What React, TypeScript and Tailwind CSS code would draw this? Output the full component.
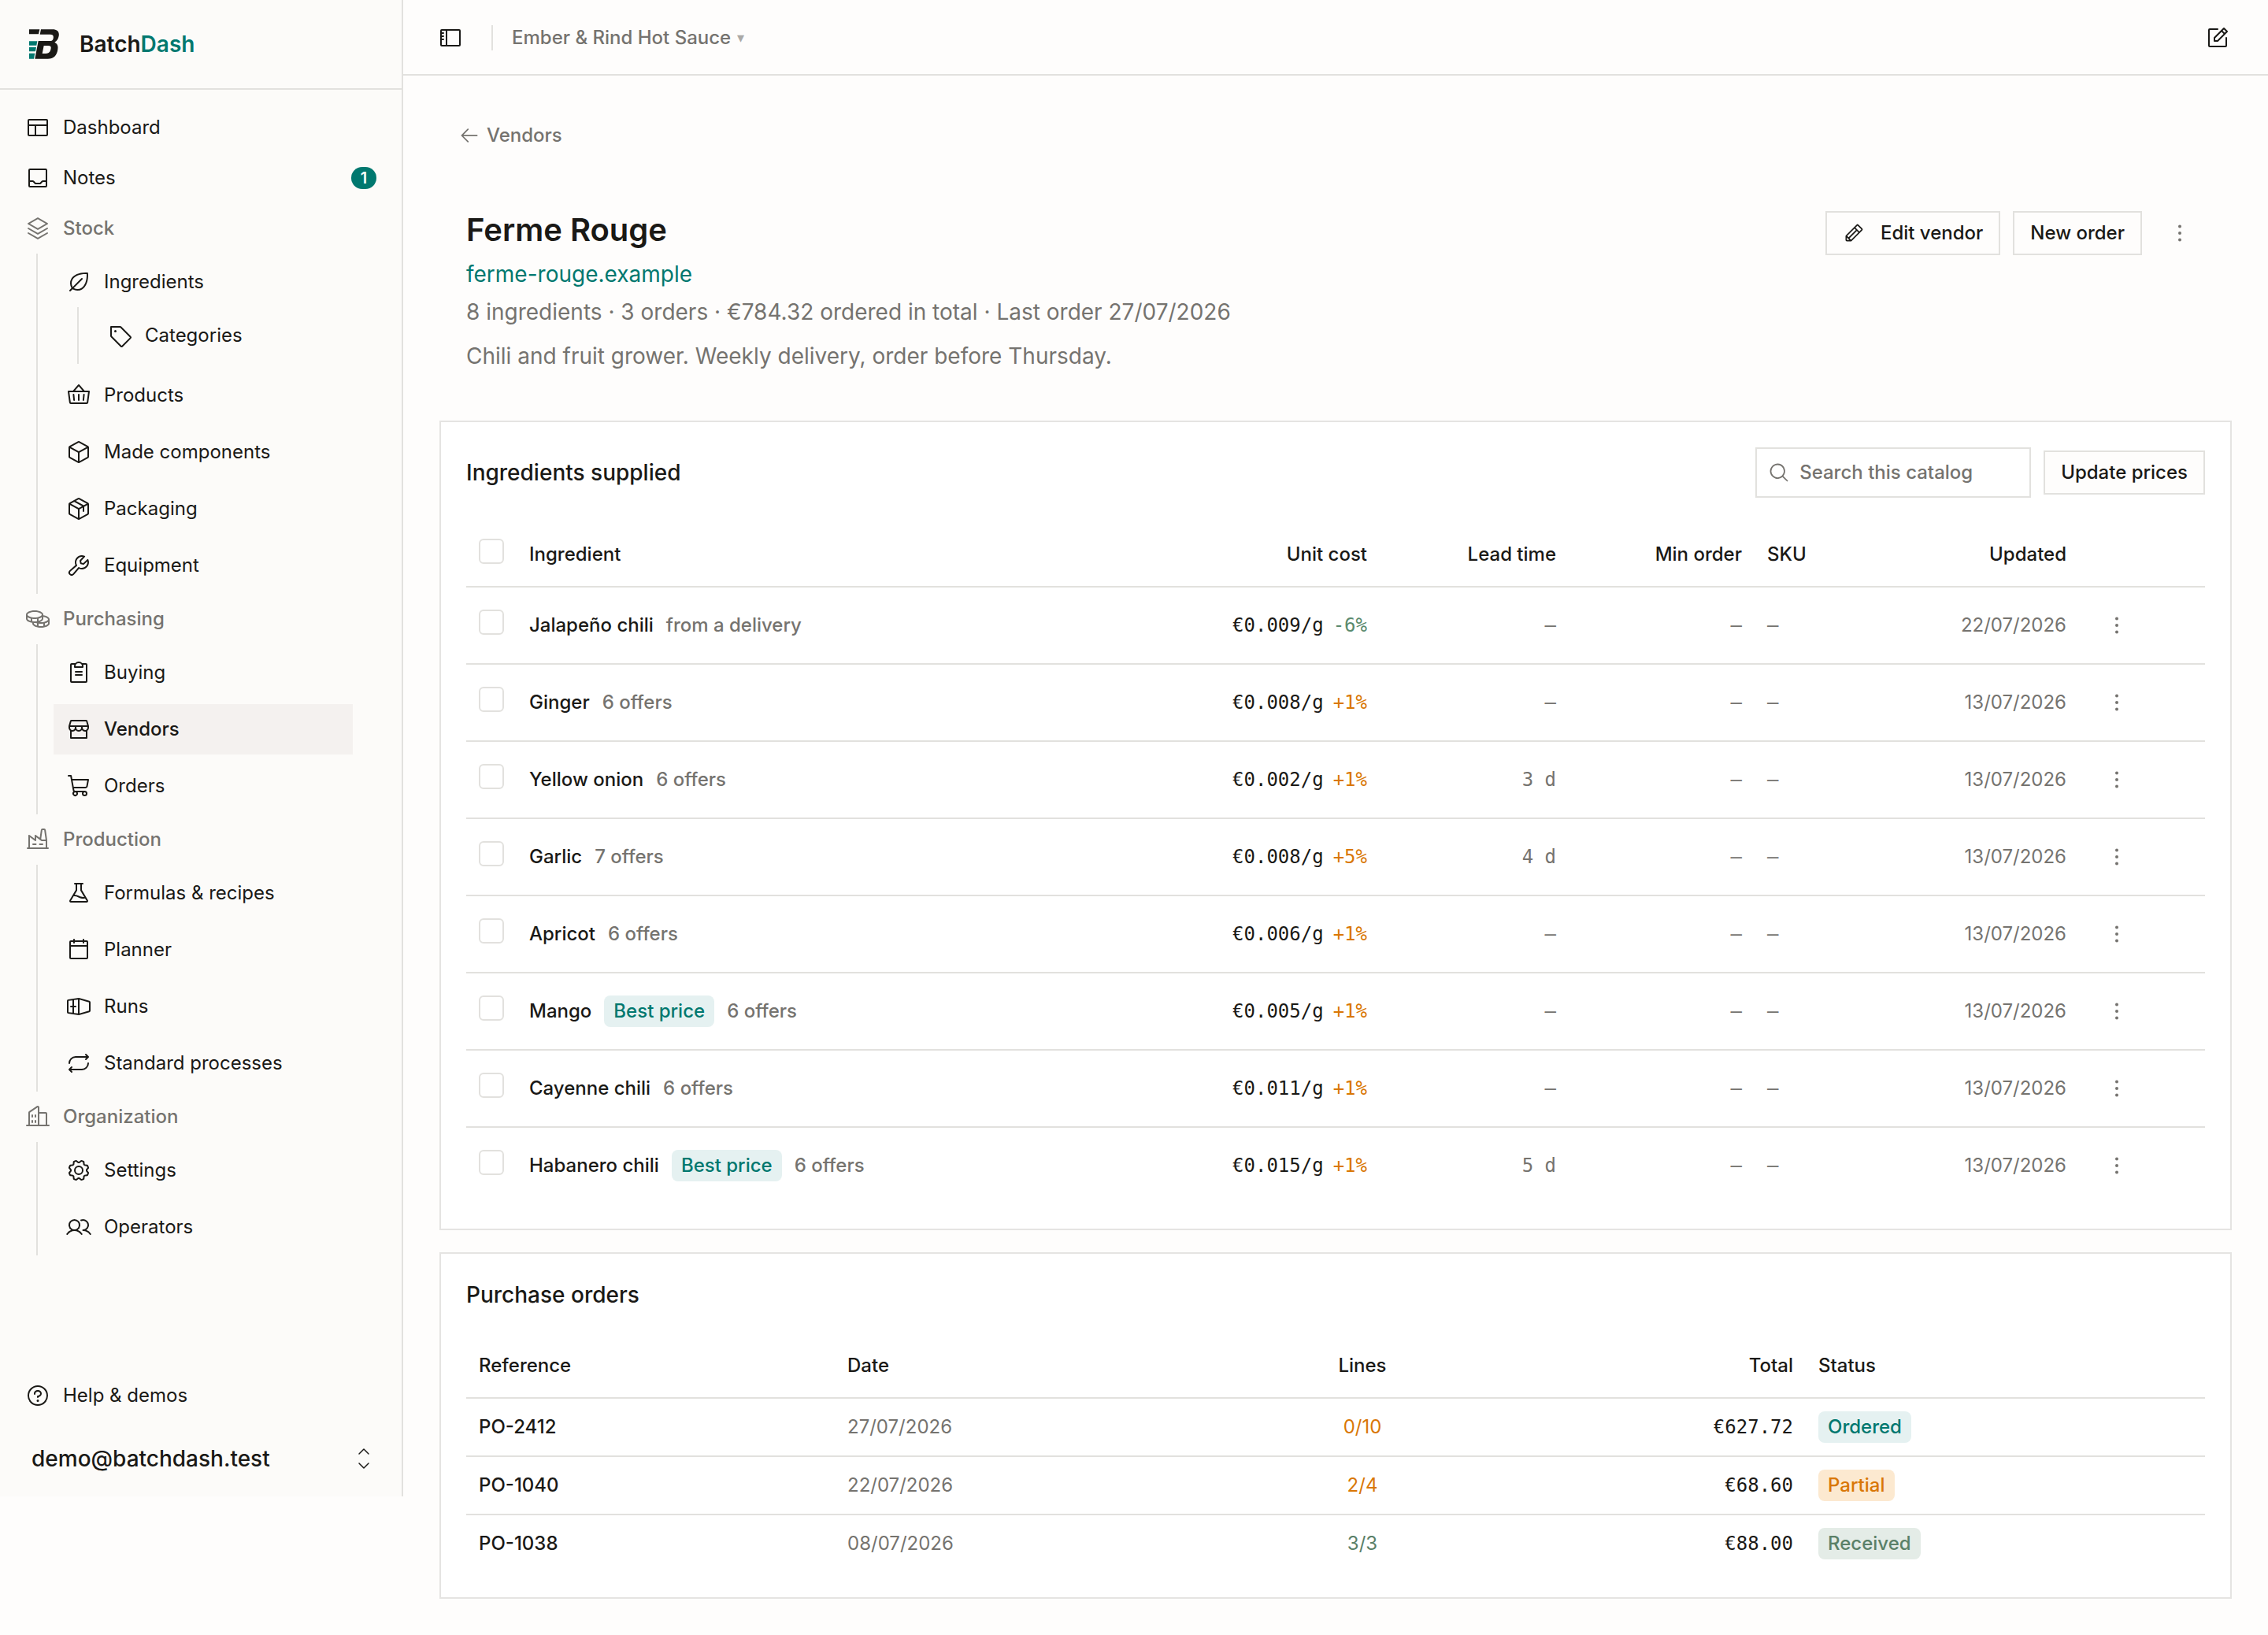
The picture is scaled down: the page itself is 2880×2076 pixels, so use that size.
import type { ReactNode } from 'react'
import type { IconType } from 'react-icons'
import {
    PiArrowLeft,
    PiBasket,
    PiBuildings,
    PiCalendarBlank,
    PiCaretUpDownLight,
    PiClipboardText,
    PiCoins,
    PiCube,
    PiDotsThreeVerticalBold,
    PiFactory,
    PiFlask,
    PiGear,
    PiLayout,
    PiLeaf,
    PiMagnifyingGlass,
    PiNotePencil,
    PiPackage,
    PiPencil,
    PiQuestion,
    PiRepeat,
    PiShippingContainer,
    PiShoppingCart,
    PiSidebar,
    PiStack,
    PiStorefront,
    PiTag,
    PiTray,
    PiUsers,
    PiWrench,
} from 'react-icons/pi'

interface NavItem {
    label: string
    icon: IconType
    active?: boolean
    children?: NavItem[]
}

const groups: NavItem[] = [
    {
        label: 'Stock',
        icon: PiStack,
        children: [
            { label: 'Ingredients', icon: PiLeaf, children: [{ label: 'Categories', icon: PiTag }] },
            { label: 'Products', icon: PiBasket },
            { label: 'Made components', icon: PiCube },
            { label: 'Packaging', icon: PiPackage },
            { label: 'Equipment', icon: PiWrench },
        ],
    },
    {
        label: 'Purchasing',
        icon: PiCoins,
        children: [
            { label: 'Buying', icon: PiClipboardText },
            { label: 'Vendors', icon: PiStorefront, active: true },
            { label: 'Orders', icon: PiShoppingCart },
        ],
    },
    {
        label: 'Production',
        icon: PiFactory,
        children: [
            { label: 'Formulas & recipes', icon: PiFlask },
            { label: 'Planner', icon: PiCalendarBlank },
            { label: 'Runs', icon: PiShippingContainer },
            { label: 'Standard processes', icon: PiRepeat },
        ],
    },
    {
        label: 'Organization',
        icon: PiBuildings,
        children: [
            { label: 'Settings', icon: PiGear },
            { label: 'Operators', icon: PiUsers },
        ],
    },
]

const ingredients = [
    { name: 'Jalapeño chili', note: 'from a delivery', cost: '€0.009/g', change: '-6%', lead: '–', updated: '22/07/2026' },
    { name: 'Ginger', note: '6 offers', cost: '€0.008/g', change: '+1%', lead: '–', updated: '13/07/2026' },
    { name: 'Yellow onion', note: '6 offers', cost: '€0.002/g', change: '+1%', lead: '3 d', updated: '13/07/2026' },
    { name: 'Garlic', note: '7 offers', cost: '€0.008/g', change: '+5%', lead: '4 d', updated: '13/07/2026' },
    { name: 'Apricot', note: '6 offers', cost: '€0.006/g', change: '+1%', lead: '–', updated: '13/07/2026' },
    { name: 'Mango', note: '6 offers', best: true, cost: '€0.005/g', change: '+1%', lead: '–', updated: '13/07/2026' },
    { name: 'Cayenne chili', note: '6 offers', cost: '€0.011/g', change: '+1%', lead: '–', updated: '13/07/2026' },
    { name: 'Habanero chili', note: '6 offers', best: true, cost: '€0.015/g', change: '+1%', lead: '5 d', updated: '13/07/2026' },
]

const orders = [
    { ref: 'PO-2412', date: '27/07/2026', lines: '0/10', total: '€627.72', status: 'Ordered' },
    { ref: 'PO-1040', date: '22/07/2026', lines: '2/4', total: '€68.60', status: 'Partial' },
    { ref: 'PO-1038', date: '08/07/2026', lines: '3/3', total: '€88.00', status: 'Received' },
]

const badgeStyles: Record<string, string> = {
    Ordered: 'bg-[#e5f1f1] text-[#00786f]',
    Partial: 'bg-[#fce9d0] text-[#d97706]',
    Received: 'bg-[#e4ece7] text-[#5a8068]',
}

function Logo() {
    return (
        <svg className="size-[38px]" viewBox="0 0 114 114" aria-hidden="true">
            <path fill="#1a1916" d="M0 1h40l-4 18H0z" />
            <path
                fill="#1a1916"
                fillRule="evenodd"
                d="M45 1h44c18 0 27 9 24 25-2 11-7 19-16 24 11 5 14 14 12 27-3 23-16 36-38 36H22l13-68h44c8 0 12-3 13-10 2-11-2-15-12-15H41zM56 63h17c8 0 11 3 10 10-2 14-8 20-19 20H50z"
            />
            <path fill="#00786f" d="M0 46h31l-3 16H0zM0 69h27l-3 16H0zM0 92h22l-4 21H0z" />
        </svg>
    )
}

function NavLink({ item }: { item: NavItem }) {
    const Icon = item.icon
    return (
        <li>
            <a
                href="#"
                className={`flex h-16 items-center gap-4 px-4 ${item.active ? 'bg-[#f4f1ef] font-medium' : ''}`}
            >
                <Icon className="size-8" />
                {item.label}
            </a>
            {item.children && (
                <ul className="ml-[30px] border-l-2 border-[#e2e1de] py-1 pl-5">
                    {item.children.map((child) => (
                        <NavLink key={child.label} item={child} />
                    ))}
                </ul>
            )}
        </li>
    )
}

function Sidebar() {
    return (
        <aside className="w-[512px] shrink-0 self-start border-r-2 border-[#e2e1de] bg-[#fcfbf9]">
            <div className="flex h-[114px] items-center gap-[26px] border-b-2 border-[#e2e1de] px-[37px]">
                <Logo />
                <span className="text-[28px] font-semibold">
                    Batch<span className="text-[#00786f]">Dash</span>
                </span>
            </div>
            <nav className="pt-4 pb-[146px]">
                <a href="#" className="flex h-16 items-center gap-4 px-8">
                    <PiLayout className="size-8" />
                    Dashboard
                </a>
                <a href="#" className="flex h-16 items-center gap-4 px-8">
                    <PiTray className="size-8" />
                    Notes
                    <span className="ml-auto flex h-7 w-8 items-center justify-center rounded-full bg-[#00786f] text-[20px] font-semibold text-white">
                        1
                    </span>
                </a>
                {groups.map((group) => (
                    <div key={group.label}>
                        <div className="flex h-16 items-center gap-4 px-8 font-medium text-[#75736f]">
                            <group.icon className="size-8" />
                            {group.label}
                        </div>
                        <ul className="mr-[62px] ml-[46px] flex flex-col gap-2 border-l-2 border-[#e2e1de] py-1 pl-5">
                            {group.children?.map((item) => (
                                <NavLink key={item.label} item={item} />
                            ))}
                        </ul>
                    </div>
                ))}
            </nav>
            <a href="#" className="flex h-16 items-center gap-4 px-8">
                <PiQuestion className="size-8" />
                Help &amp; demos
            </a>
            <button type="button" className="flex h-24 w-full items-center justify-between pr-8 pl-10 text-[28px] font-medium">
                demo@batchdash.test
                <PiCaretUpDownLight className="size-8" />
            </button>
        </aside>
    )
}

function TopBar() {
    return (
        <header className="flex h-24 items-center border-b-2 border-[#e2e1de] pt-[2px] pr-12 pl-11">
            <button type="button" aria-label="Toggle sidebar">
                <PiSidebar className="size-8" />
            </button>
            <span className="mr-6 ml-9 h-8 w-[2px] bg-[#e2e1de]" />
            <button type="button" className="flex items-center gap-2 font-medium text-[#75736f]">
                Ember &amp; Rind Hot Sauce
                <span className="text-[18px] text-[#aaa9a6]">▾</span>
            </button>
            <button type="button" aria-label="New note" className="ml-auto">
                <PiNotePencil className="size-8" />
            </button>
        </header>
    )
}

function OutlineButton({ children }: { children: ReactNode }) {
    return (
        <button
            type="button"
            className="flex h-14 items-center gap-5 border-2 border-[#e2e1de] bg-[#fefdfc] px-5 font-medium whitespace-nowrap"
        >
            {children}
        </button>
    )
}

function MoreButton({ label }: { label: string }) {
    return (
        <button type="button" aria-label={label} className="flex h-14 w-16 items-center justify-center text-[#75736f]">
            <PiDotsThreeVerticalBold className="size-8" />
        </button>
    )
}

function Checkbox({ label }: { label: string }) {
    return (
        <input
            type="checkbox"
            aria-label={label}
            className="mb-2 block size-8 appearance-none rounded-md border-2 border-[#e2e1de] checked:bg-[#00786f]"
        />
    )
}

function Badge({ className, children }: { className: string; children: ReactNode }) {
    return (
        <span className={`inline-flex h-10 items-center rounded-lg px-3 font-medium ${className}`}>{children}</span>
    )
}

function IngredientsCard() {
    return (
        <section className="bg-white p-8 ring-2 ring-[#e5e4e2]">
            <div className="mb-8 flex items-center gap-4">
                <h2 className="mr-auto text-[28px] leading-10 font-medium">Ingredients supplied</h2>
                <label className="flex h-16 w-[350px] items-center gap-3 border-2 border-[#e2e1de] px-[14px] text-[#75736f]">
                    <PiMagnifyingGlass className="size-7 shrink-0" />
                    <input
                        type="search"
                        aria-label="Search this catalog"
                        placeholder="Search this catalog"
                        className="w-full min-w-0 bg-transparent font-medium outline-none placeholder:text-[#75736f]"
                    />
                </label>
                <OutlineButton>Update prices</OutlineButton>
            </div>
            <table className="w-full table-fixed">
                <colgroup>
                    <col className="w-16" />
                    <col />
                    <col className="w-[260px]" />
                    <col className="w-[240px]" />
                    <col className="w-[236px]" />
                    <col className="w-[172px]" />
                    <col className="w-[240px]" />
                    <col className="w-[160px]" />
                </colgroup>
                <thead>
                    <tr className="h-[81px] border-b-2 border-[#e2e1de]">
                        <th className="px-4">
                            <Checkbox label="Select all" />
                        </th>
                        <th className="px-4 text-left font-medium">Ingredient</th>
                        <th className="px-4 text-right font-medium">Unit cost</th>
                        <th className="px-4 text-right font-medium">Lead time</th>
                        <th className="px-4 text-right font-medium">Min order</th>
                        <th className="px-4 text-left font-medium">SKU</th>
                        <th className="px-4 text-right font-medium">Updated</th>
                        <th />
                    </tr>
                </thead>
                <tbody>
                    {ingredients.map((row) => (
                        <tr key={row.name} className="h-[98px] border-b-2 border-[#e2e1de] last:h-[97px] last:border-b-0">
                            <td className="px-4">
                                <Checkbox label={`Select ${row.name}`} />
                            </td>
                            <td className="px-4">
                                <div className="flex items-center gap-4 font-medium">
                                    <a href="#">{row.name}</a>
                                    {row.best && <Badge className="bg-[#e5f1f1] text-[#00786f]">Best price</Badge>}
                                    <span className="text-[#75736f]">{row.note}</span>
                                </div>
                            </td>
                            <td className="px-4 text-right font-['DejaVu_Sans_Mono',monospace] whitespace-nowrap">
                                {row.cost}
                                <span className={`ml-3 ${row.change.startsWith('-') ? 'text-[#5a8a6e]' : 'text-[#d97706]'}`}>
                                    {row.change}
                                </span>
                            </td>
                            <td className="px-4 text-right font-['DejaVu_Sans_Mono',monospace] text-[#75736f]">{row.lead}</td>
                            <td className="px-4 text-right font-['DejaVu_Sans_Mono',monospace] text-[#75736f]">–</td>
                            <td className="px-4 font-['DejaVu_Sans_Mono',monospace] text-[#75736f]">–</td>
                            <td className="px-4 text-right text-[#75736f]">{row.updated}</td>
                            <td className="px-4">
                                <MoreButton label={`Actions for ${row.name}`} />
                            </td>
                        </tr>
                    ))}
                </tbody>
            </table>
        </section>
    )
}

function OrdersCard() {
    return (
        <section className="bg-white p-8 ring-2 ring-[#e5e4e2]">
            <h2 className="mb-[30px] text-[28px] leading-10 font-medium">Purchase orders</h2>
            <table className="w-full table-fixed">
                <colgroup>
                    <col className="w-[468px]" />
                    <col className="w-[440px]" />
                    <col className="w-[460px]" />
                    <col className="w-[333px]" />
                    <col />
                </colgroup>
                <thead>
                    <tr className="h-[81px] border-b-2 border-[#e2e1de]">
                        <th className="px-4 text-left font-medium">Reference</th>
                        <th className="px-4 text-left font-medium">Date</th>
                        <th className="px-4 text-center font-medium">Lines</th>
                        <th className="px-4 text-right font-medium">Total</th>
                        <th className="px-4 text-left font-medium">Status</th>
                    </tr>
                </thead>
                <tbody>
                    {orders.map((order) => (
                        <tr key={order.ref} className="h-[74px] border-b-2 border-[#e2e1de] last:h-[73px] last:border-b-0">
                            <td className="px-4 font-medium">
                                <a href="#">{order.ref}</a>
                            </td>
                            <td className="px-4 text-[#75736f]">{order.date}</td>
                            <td className={`px-4 text-center ${order.status === 'Received' ? 'text-[#5a8068]' : 'text-[#d97706]'}`}>
                                {order.lines}
                            </td>
                            <td className="px-4 text-right font-['DejaVu_Sans_Mono',monospace]">{order.total}</td>
                            <td className="px-4">
                                <div className="flex">
                                    <Badge className={badgeStyles[order.status]}>{order.status}</Badge>
                                </div>
                            </td>
                        </tr>
                    ))}
                </tbody>
            </table>
        </section>
    )
}

export default function App() {
    return (
        <div className="flex min-h-screen bg-[#fefdfc] font-['Inter',sans-serif] text-[24px] leading-8 text-[#1a1916]">
            <Sidebar />
            <div className="min-w-0 flex-1">
                <TopBar />
                <main className="p-12">
                    <a href="#" className="inline-flex h-14 items-center gap-2 px-[22px] font-medium text-[#75736f]">
                        <PiArrowLeft className="size-7" />
                        Vendors
                    </a>
                    <div className="mt-[68px] mb-16 flex items-start justify-between px-8">
                        <div className="text-[28px] leading-10 text-[#75736f]">
                            <h1 className="mb-3 text-[40px] leading-[48px] font-semibold text-[#1a1916]">Ferme Rouge</h1>
                            <a href="#" className="text-[#00786f]">
                                ferme-rouge.example
                            </a>
                            <p className="mt-2">
                                8 ingredients · 3 orders · €784.32 ordered in total · Last order 27/07/2026
                            </p>
                            <p className="mt-4">Chili and fruit grower. Weekly delivery, order before Thursday.</p>
                        </div>
                        <div className="flex gap-4">
                            <OutlineButton>
                                <PiPencil className="size-7" />
                                Edit vendor
                            </OutlineButton>
                            <OutlineButton>New order</OutlineButton>
                            <MoreButton label="More actions" />
                        </div>
                    </div>
                    <div className="flex flex-col gap-8">
                        <IngredientsCard />
                        <OrdersCard />
                    </div>
                </main>
            </div>
        </div>
    )
}
